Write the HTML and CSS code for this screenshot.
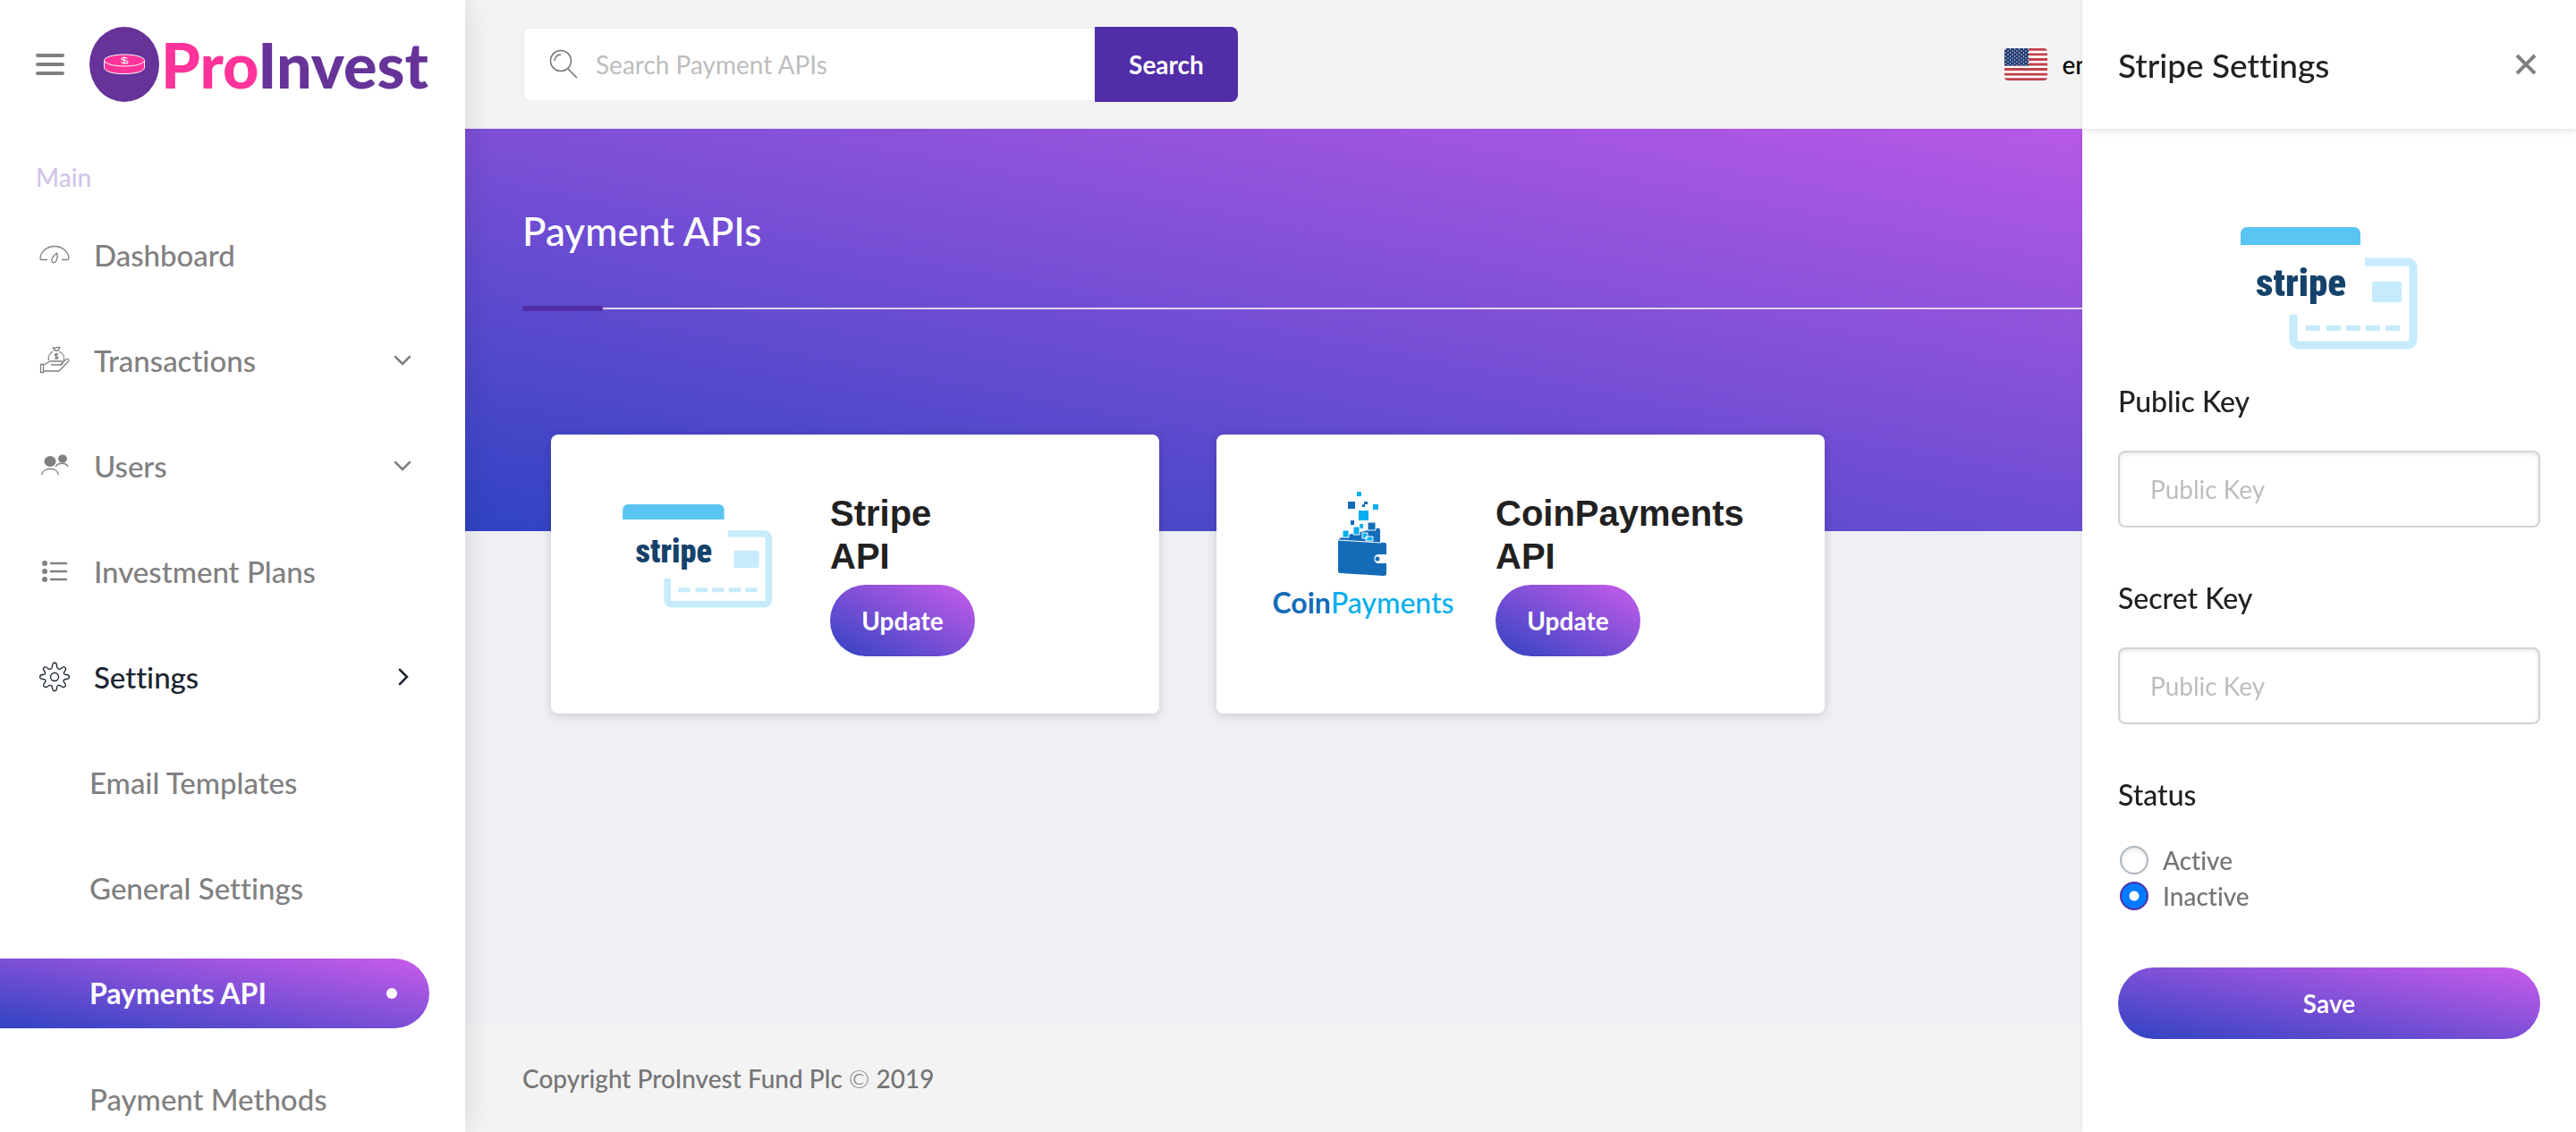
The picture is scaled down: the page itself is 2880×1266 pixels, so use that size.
FILE: index.html
```html
<!DOCTYPE html>
<html lang="en">
<head>
<meta charset="utf-8">
<meta name="viewport" content="width=device-width, initial-scale=1">
<title>Payment APIs - ProInvest</title>
<link rel="stylesheet" href="styles.css">
</head>
<body>
<svg class="sprite" aria-hidden="true">
  <symbol id="stripe-card" viewBox="0 0 198 137">
    <path fill="#5ac4f3" d="M0 20V7a7 7 0 0 1 7-7h120a7 7 0 0 1 7 7v13z"/>
    <path fill="none" stroke="#c6ebfc" stroke-width="9" d="M139 39h48a6 6 0 0 1 6 6v81a6 6 0 0 1-6 6H65a6 6 0 0 1-6-6V98"/>
    <rect fill="#c6ebfc" x="147" y="61" width="33" height="23" rx="2"/>
    <path fill="none" stroke="#c6ebfc" stroke-width="6" d="M73 113h16m7 0h16m6 0h16m6 0h16m6 0h16"/>
    <text x="17" y="77" fill="#15426b" font-family="'Roboto Condensed',Roboto,sans-serif" font-weight="900" font-size="43">stripe</text>
  </symbol>
  <symbol id="chevron-down" viewBox="0 0 20 20"><path fill="none" stroke="currentColor" stroke-width="2.500" stroke-linecap="round" d="M2 6l8 8 8-8"/></symbol>
  <symbol id="chevron-right" viewBox="0 0 20 20"><path fill="none" stroke="currentColor" stroke-width="2.500" stroke-linecap="round" d="M7 2l8 8-8 8"/></symbol>
</svg>
<div class="app">
  <aside class="sidebar">
    <div class="brand">
      <button class="burger" aria-label="Toggle menu"><span></span><span></span><span></span></button>
      <a class="logo" href="#">
        <svg width="78" height="84" viewBox="0 0 78 84" aria-hidden="true">
          <ellipse cx="39" cy="42" rx="39" ry="42" fill="#639"/>
          <path d="M16.500 37.500v8c0 9.500 45 9.500 45 0v-8" fill="#f39" stroke="#fff" stroke-width="1"/>
          <ellipse cx="39" cy="37.500" rx="22.500" ry="6.500" fill="#f39" stroke="#fff" stroke-width="1"/>
          <path d="M42.500 35.500c-1-1.500-6.500-2-6.500.5 0 2 7 1 7 3.200 0 2.300-6.500 2-7.500.3M39 33.500v8" fill="none" stroke="#fff" stroke-width="1.200"/>
        </svg>
        <span class="wordmark"><span class="pro">Pro</span>Invest</span>
      </a>
    </div>
    <h2 class="nav-title">Main</h2>
    <nav class="nav">
      <a href="#"><svg class="icon" viewBox="0 0 34 34"><path d="M9 22.500H2.500c-1.500 0-1.500-1-1.500-2 1-7.500 7-13 16-13s15 5.500 16 13c0 1 0 2-1.500 2H25M19.500 15c-4 3.500-6.500 7.500-5.500 9.500s4 1.500 5-1 1.500-6 .5-8.500z"/></svg>Dashboard</a>
      <a href="#"><svg class="icon" viewBox="0 0 34 34"><path d="M1.500 21.500h3v9h-3zM5 22l7-4h12c2.500 0 2.500 4 0 4H13M24 21l6-5c2-1.500 4 .5 2.500 2L22 29H5M15 2l2 4h4l2-4c-2 2-3-1-5 1s-3-1-3-1zM15 7c-3 2-6 6-4.500 10M22 7c4 2 7 6 5 11M21 10.500c-2-1.500-4-.5-3.500 1s3.500 1 3.500 2.500-2.500 2-4 .5M19 9v7"/></svg>Transactions<svg class="chevron"><use href="#chevron-down"/></svg></a>
      <a href="#"><svg class="icon" viewBox="0 0 34 34"><ellipse class="solid" cx="12" cy="12" rx="6.500" ry="6"/><ellipse class="solid" cx="26" cy="9" rx="5" ry="4.500"/><path d="M2.500 27C4 18 20 18 21.500 27M18 18c3-5 12-5 14 0"/></svg>Users<svg class="chevron"><use href="#chevron-down"/></svg></a>
      <a href="#"><svg class="icon" viewBox="0 0 34 34"><path class="bold" d="M13 8h17M13 17h17M13 26h17"/><circle class="solid" cx="6" cy="8" r="3"/><circle class="solid" cx="6" cy="17" r="3"/><circle class="solid" cx="6" cy="26" r="3"/></svg>Investment Plans</a>
      <a href="#" class="open"><svg class="icon" viewBox="0 0 34 34"><circle cx="17" cy="17" r="4.500"/><path d="M14.500 5c0-5 5-5 5 0 0 3 3 4.500 5 2.500 3.500-3.500 6.500 0 4 3-2 2.500-1 4 1.500 4 4.500 0 4.500 5 0 5-3 0-4 2-2 4 3.500 3.500-.5 6.500-3.500 4-2.500-2-5-1-5 1.500 0 5-5 5-5 0 0-2.500-2.500-3.500-5-1.500-3 2.500-7-.5-3.500-4 2-2 1-4-2-4-4.500 0-4.500-5 0-5 2.500 0 3.500-1.500 1.500-4-2.500-3 .5-6.500 4-3 2 2 5 .5 5-2.500z"/></svg>Settings<svg class="chevron"><use href="#chevron-right"/></svg></a>
      <a href="#" class="sub">Email Templates</a>
      <a href="#" class="sub">General Settings</a>
      <a href="#" class="sub current">Payments API</a>
      <a href="#" class="sub">Payment Methods</a>
    </nav>
  </aside>
  <div class="page">
    <header class="topbar">
      <form class="search">
        <label class="search-box">
          <svg width="32" height="34" viewBox="0 0 32 34" fill="none" stroke="#707070" stroke-width="1.500" aria-hidden="true"><circle cx="13" cy="13" r="11.500"/><path d="M21 22l10 10M6 13a7 7 0 0 1 7-7"/></svg>
          <input type="search" placeholder="Search Payment APIs" aria-label="Search Payment APIs">
        </label>
        <button class="search-button">Search</button>
      </form>
      <a class="language" href="#">
        <svg width="48" height="36" viewBox="0 0 48 36" aria-hidden="true">
          <defs>
            <clipPath id="flag-round"><rect width="48" height="36" rx="4"/></clipPath>
            <pattern id="stars" width="5" height="4" patternUnits="userSpaceOnUse"><circle cx="1.500" cy="1" r=".7" fill="#fff"/><circle cx="4" cy="3" r=".7" fill="#fff"/></pattern>
          </defs>
          <g clip-path="url(#flag-round)">
            <path fill="#fff" d="M0 0h48v36H0z"/>
            <path stroke="#c1404b" stroke-width="2.770" d="M0 1.400h48M0 6.900h48M0 12.500h48M0 18h48M0 23.500h48M0 29.100h48M0 34.600h48"/>
            <path fill="#1f3a72" d="M0 0h27v19.400H0z"/><path fill="url(#stars)" d="M0 0h27v19.400H0z"/>
          </g>
        </svg>
        <span>en</span>
      </a>
    </header>
    <main class="content">
      <section class="hero"><h1>Payment APIs</h1><div class="rule"></div></section>
      <section class="cards">
        <article class="card">
          <div class="card-logo"><svg width="168" height="116"><use href="#stripe-card"/></svg></div>
          <div class="card-body"><h3>Stripe<br>API</h3><button class="pill">Update</button></div>
        </article>
        <article class="card">
          <div class="card-logo coin-logo">
            <svg width="56" height="94" viewBox="0 0 56 94" aria-hidden="true">
              <path fill="#146cb8" d="M2 52l9-4 14-3 18-4c2-1 4 0 4 2v14L0 54zM0 56c0-2 1-2 3-2l49 3c2 0 2 1 2 3v10H45c-6 0-6 10 0 10h9v12c0 1-1 2-3 2L3 91c-2 0-3-1-3-2z"/>
              <circle cx="44" cy="75" r="2.500" fill="#146cb8"/>
              <path fill="none" stroke="#fff" d="M0 54l48 3"/>
              <g fill="#146cb8"><path d="M11 11h8v8h-8zM29 11h4v3h-4zM27 14h3v3h-3zM14 32h4v5h-4z"/><path stroke="#fff" d="M33 34h9v9h-9z"/></g>
              <g fill="#06aeee"><path d="M21 0h5v5h-5zM39 14h6v6h-6zM23 21h11v11H23zM24 36h4v5h-4z"/><path stroke="#fff" d="M17 39h7v9h-7zM5 43h7v8H5zM27 46h6v6h-6zM31 50h8v5h-8z"/></g>
            </svg>
            <span class="coin-name"><b>Coin</b>Payments</span>
          </div>
          <div class="card-body"><h3>CoinPayments<br>API</h3><button class="pill">Update</button></div>
        </article>
      </section>
    </main>
    <footer class="footer">Copyright ProInvest Fund Plc <span class="mark">©</span> 2019</footer>
  </div>
</div>
<aside class="drawer">
  <header class="drawer-head">
    <h2>Stripe Settings</h2>
    <button class="close" aria-label="Close"><svg width="24" height="24" viewBox="0 0 24 24"><path fill="none" stroke="#808080" stroke-width="4" d="M2 2l20 20M22 2L2 22"/></svg></button>
  </header>
  <form class="drawer-form">
    <svg class="drawer-logo" width="198" height="137"><use href="#stripe-card"/></svg>
    <label class="field-label" for="public-key">Public Key</label>
    <input class="field" id="public-key" type="text" placeholder="Public Key">
    <label class="field-label" for="secret-key">Secret Key</label>
    <input class="field" id="secret-key" type="text" placeholder="Public Key">
    <fieldset class="status">
      <legend class="field-label">Status</legend>
      <label class="choice"><input type="radio" name="status">Active</label>
      <label class="choice"><input type="radio" name="status" checked>Inactive</label>
    </fieldset>
    <button class="pill save">Save</button>
  </form>
</aside>
</body>
</html>
```

FILE: styles.css
```css
:root {
  --gradient: linear-gradient(to top right, #3043c2, #c95ceb);
  --violet: #512da8;
  --grey: #808080;
}
* { box-sizing: border-box; }
body {
  margin: 0;
  font-family: Lato, "Noto Sans", sans-serif;
  font-size: 28px;
  font-weight: 500;
  font-variant-ligatures: none;
  color: #212121;
  background: #eff0f5;
}
h1, h2, h3 { margin: 0; font-weight: 500; }
a { color: inherit; text-decoration: none; }
button { border: 0; padding: 0; background: none; font: inherit; cursor: pointer; }
input { font: inherit; }
input::placeholder { color: #bdbdbd; font-weight: 400; opacity: 1; }
.sprite { position: absolute; width: 0; height: 0; }

.app { display: flex; height: 100vh; min-height: 1200px; }

/* Sidebar */
.sidebar {
  position: relative;
  flex: none;
  width: 520px;
  overflow: hidden;
  background: #fff;
  box-shadow: 0 0 30px rgba(0, 0, 0, .12);
}
.brand { display: flex; align-items: center; gap: 28px; height: 144px; padding-left: 40px; }
.burger { display: grid; flex: none; gap: 6px; width: 32px; }
.burger span { height: 4px; border-radius: 2px; background: var(--grey); }
.logo { display: flex; align-items: center; gap: 2px; }
.wordmark { font-size: 70px; font-weight: 900; line-height: 84px; color: #639; }
.wordmark .pro { color: #f39; }
.nav-title { margin: 36px 0 30px; padding-left: 40px; font-size: 28px; line-height: 36px; color: #d1c4e9; }
.nav { display: flex; flex-direction: column; gap: 40px; margin-right: 40px; }
.nav a { display: flex; align-items: center; height: 78px; padding: 0 20px 0 44px; font-size: 33px; line-height: 40px; color: var(--grey); }
.nav .sub { padding: 0 36px 0 100px; }
.nav .open { color: #1b2430; }
.nav .current { color: #fff; font-weight: 700; font-size: 32px; background: var(--gradient); border-radius: 0 39px 39px 0; }
.nav .current::after { content: ""; width: 12px; height: 12px; margin-left: auto; border-radius: 50%; background: #fff; }
.icon { width: 34px; height: 34px; margin-right: 27px; fill: none; stroke: currentColor; stroke-width: 1.300; }
.icon .solid { fill: currentColor; stroke: none; }
.icon .bold { stroke-width: 2.400; stroke-linecap: round; }
.chevron { width: 20px; height: 20px; margin-left: auto; }

/* Page */
.page { display: flex; flex: 1; flex-direction: column; min-width: 0; }
.topbar { display: flex; align-items: center; justify-content: space-between; height: 144px; padding: 0 544px 0 64px; background: #f3f3f3; }
.search { display: flex; align-items: stretch; width: 800px; height: 84px; }
.search-box { display: flex; flex: 1; align-items: center; gap: 20px; padding-left: 28px; background: #fff; border: 2px solid #f0f0f0; border-radius: 8px 0 0 8px; }
.search-box input { flex: 1; min-width: 0; padding: 0; border: 0; outline: 0; background: none; }
.search-button { width: 160px; border-radius: 0 8px 8px 0; background: var(--violet); color: #fff; font-weight: 700; }
.language { display: flex; align-items: center; gap: 17px; color: #000; }
.content { flex: 1; }
.hero { height: 450px; padding: 86px 64px 0; background: var(--gradient); color: #fff; }
.hero h1 { font-size: 44px; line-height: 56px; }
.rule { display: flex; align-items: center; margin-top: 56px; }
.rule::before { content: ""; width: 90px; height: 6px; border-radius: 2px; background: var(--violet); }
.rule::after { content: ""; flex: 1; height: 2px; background: #e0d4ea; }
.cards { display: flex; gap: 64px; margin-top: -108px; padding: 0 96px; }
.card { display: grid; grid-template-columns: 200px 1fr; gap: 48px; width: 680px; height: 312px; padding: 64px; border-radius: 8px; background: #fff; box-shadow: 0 2px 12px rgba(0, 0, 0, .16); }
.card-logo { display: flex; flex-direction: column; align-items: center; padding-top: 14px; }
.card-logo.coin-logo { padding-top: 0; }
.coin-name { margin-top: 12px; font-size: 32px; line-height: 36px; color: #06aeee; }
.coin-name b { color: #146cb8; }
.card-body h3 { margin-bottom: 8px; font-family: "Liberation Sans", Arial, sans-serif; font-size: 40px; font-weight: 700; line-height: 48px; }
.pill { width: 162px; height: 80px; border-radius: 40px; background: var(--gradient); color: #fff; font-weight: 700; }
.footer { height: 120px; padding-left: 64px; background: #f3f3f3; color: #757575; line-height: 120px; }
.footer .mark { font-weight: 300; }

/* Settings drawer, over the page */
.drawer { position: fixed; top: 0; right: 0; bottom: 0; width: 552px; overflow: hidden; background: #fff; box-shadow: 0 0 6px rgba(0, 0, 0, .08); }
.drawer-head { display: flex; align-items: center; justify-content: space-between; height: 144px; padding: 0 44px 0 40px; box-shadow: 0 2px 8px rgba(0, 0, 0, .12); }
.drawer-head h2 { font-size: 37px; }
.close { display: flex; }
.drawer-form { display: flex; flex-direction: column; padding: 110px 40px 0; }
.drawer-logo { align-self: center; margin-bottom: 38px; }
.field-label { padding: 0; font-size: 32px; line-height: 40px; }
.field { height: 86px; margin: 35px 0 59px; padding: 0 34px; border: 2px solid #ced4da; border-radius: 8px; outline: 0; box-shadow: inset 0 2px 4px rgba(0, 0, 0, .1); }
.status { display: flex; flex-direction: column; margin: 0 0 60px; padding: 0; border: 0; }
.status legend { margin-bottom: 33px; }
.choice { display: flex; align-items: center; gap: 16px; height: 40px; padding-left: 2px; color: #757575; }
.choice input { appearance: none; width: 32px; height: 32px; margin: 0; border: 2px solid #adb5bd; border-radius: 50%; background: #fff; box-shadow: inset 0 2px 4px rgba(0, 0, 0, .12); }
.choice input:checked { border-color: var(--violet); background: radial-gradient(circle, #fff 5px, #007bff 6px); box-shadow: none; }
.save { width: 100%; }
```
